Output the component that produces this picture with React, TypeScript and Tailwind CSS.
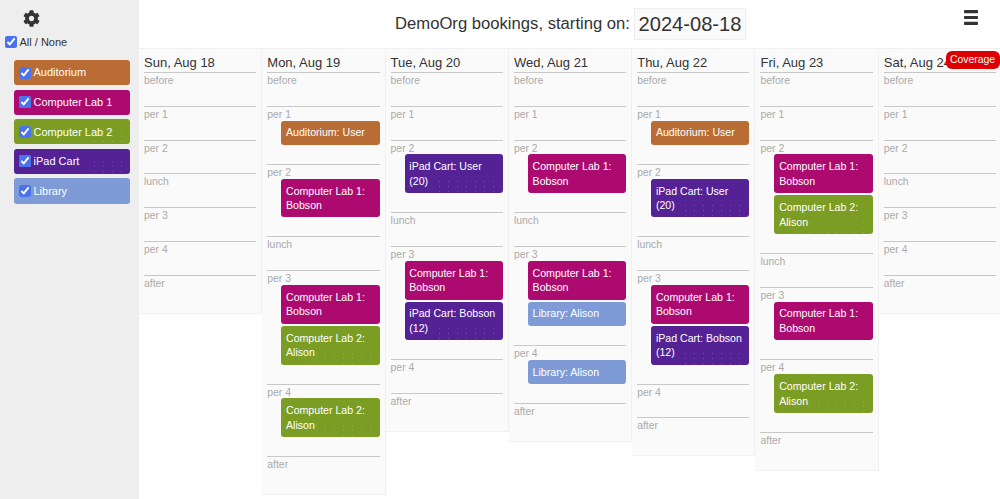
import { FaCog } from "react-icons/fa";

type Booking = { label: string; second?: string; color: string; dots?: boolean };

const AUD = "#b96d34";
const LAB1 = "#ad0a70";
const LAB2 = "#7c9d24";
const IPAD = "#552295";
const LIB = "#7e9bd8";

const resources = [
  { name: "Auditorium", color: AUD },
  { name: "Computer Lab 1", color: LAB1 },
  { name: "Computer Lab 2", color: LAB2, dots: true },
  { name: "iPad Cart", color: IPAD, dots: true },
  { name: "Library", color: LIB },
];

const aud: Booking = { label: "Auditorium: User", color: AUD };
const lab1: Booking = { label: "Computer Lab 1:", second: "Bobson", color: LAB1 };
const lab2: Booking = { label: "Computer Lab 2:", second: "Alison", color: LAB2, dots: true };
const ipadUser: Booking = { label: "iPad Cart: User", second: "(20)", color: IPAD, dots: true };
const ipadBobson: Booking = { label: "iPad Cart: Bobson", second: "(12)", color: IPAD, dots: true };
const lib: Booking = { label: "Library: Alison", color: LIB };

const periods = ["before", "per 1", "per 2", "lunch", "per 3", "per 4", "after"];

const days: { title: string; bookings: Record<string, Booking[]> }[] = [
  { title: "Sun, Aug 18", bookings: {} },
  {
    title: "Mon, Aug 19",
    bookings: { "per 1": [aud], "per 2": [lab1], "per 3": [lab1, lab2], "per 4": [lab2] },
  },
  {
    title: "Tue, Aug 20",
    bookings: { "per 2": [ipadUser], "per 3": [lab1, ipadBobson] },
  },
  {
    title: "Wed, Aug 21",
    bookings: { "per 2": [lab1], "per 3": [lab1, lib], "per 4": [lib] },
  },
  {
    title: "Thu, Aug 22",
    bookings: { "per 1": [aud], "per 2": [ipadUser], "per 3": [lab1, ipadBobson] },
  },
  {
    title: "Fri, Aug 23",
    bookings: { "per 2": [lab1, lab2], "per 3": [lab1], "per 4": [lab2] },
  },
  { title: "Sat, Aug 24", bookings: {} },
];

function Dots() {
  return (
    <div className="absolute bottom-[1px] right-[2px] h-[13px] w-[66px] bg-[radial-gradient(circle,rgba(255,255,255,0.18)_0.5px,transparent_0.8px)] bg-[length:9px_5px]" />
  );
}

function BookingCard({ booking }: { booking: Booking }) {
  return (
    <div
      className="relative ml-[14px] rounded-[3px] px-[4.7px] py-[4.9px] text-[10.6px] leading-[14.5px] text-white"
      style={{ backgroundColor: booking.color }}
    >
      {booking.dots && <Dots />}
      <div className="relative">{booking.label}</div>
      {booking.second && <div className="relative">{booking.second}</div>}
    </div>
  );
}

function DayColumn({ day }: { day: (typeof days)[number] }) {
  return (
    <div className="w-[123.3px] shrink-0 self-start border-b border-r border-t border-[#f0f0f0] bg-[#fafafa] px-[5px] pb-[4px] pt-[4px]">
      <div className="h-[19px] text-[13px] leading-[19px] text-[#333333]">{day.title}</div>
      {periods.map((period) => (
        <div key={period} className="border-t border-[#c8c8c8] pb-[19px]">
          <div className="h-[13.8px] text-[10.4px] leading-[16px] text-[#aaaaaa]">{period}</div>
          <div className="flex flex-col gap-[2px]">
            {(day.bookings[period] ?? []).map((b, i) => (
              <BookingCard key={i} booking={b} />
            ))}
          </div>
        </div>
      ))}
    </div>
  );
}

export default function App() {
  return (
    <div className="flex h-[499px] w-[1000px] overflow-hidden font-['Liberation_Sans',Arial,sans-serif]">
      <div className="w-[139px] shrink-0 bg-[#eeeeee]">
        <div className="flex h-[35px] items-center pl-[23px] pt-[1px] text-[#333333]">
          <FaCog className="h-[17px] w-[17px]" />
        </div>
        <label className="flex h-[14px] items-center gap-[3px] pl-[4.5px] text-[11px] text-[#333333]">
          <input type="checkbox" defaultChecked className="m-0 h-[12px] w-[12px] accent-[#4a72ea]" />
          All / None
        </label>
        <div className="flex flex-col gap-[4.3px] pl-[14px] pr-[9.5px] pt-[11px]">
          {resources.map((r) => (
            <label
              key={r.name}
              className="relative flex h-[25.3px] items-center gap-[3px] rounded-[3px] pl-[4.5px] text-[11px] text-white"
              style={{ backgroundColor: r.color }}
            >
              {r.dots && <div className="absolute bottom-[2px] right-[4px] h-[13px] w-[36px] bg-[radial-gradient(circle,rgba(255,255,255,0.16)_0.5px,transparent_0.8px)] bg-[length:9px_5px]" />}
              <input type="checkbox" defaultChecked className="relative m-0 h-[12px] w-[12px] accent-[#4a72ea]" />
              <span className="relative">{r.name}</span>
            </label>
          ))}
        </div>
      </div>
      <div className="relative min-w-0 flex-1">
        <div className="flex h-[48px] items-center justify-center pl-[2px] text-[16.65px] text-[#333333]">
          <span>DemoOrg bookings, starting on:</span>
          <span className="ml-[4px] flex h-[32px] w-[112px] items-center justify-center border border-[#eeeeee] bg-[#fafafa] text-[20.1px]">2024-08-18</span>
        </div>
        <svg className="absolute right-[22.5px] top-[10px] h-[15px] w-[14px] text-[#333333]" viewBox="0 0 14 15" fill="currentColor">
          <rect x="0" y="0" width="14" height="3.2" rx="0.8" />
          <rect x="0" y="5.9" width="14" height="3.2" rx="0.8" />
          <rect x="0" y="11.8" width="14" height="3.2" rx="0.8" />
        </svg>
        <div className="flex">
          {days.map((d) => (
            <DayColumn key={d.title} day={d} />
          ))}
        </div>
        <div className="absolute right-[0.5px] top-[51px] flex h-[18px] w-[54px] items-center justify-center rounded-[6px] bg-[#dd0000] text-[10.4px] text-white">
          Coverage
        </div>
      </div>
    </div>
  );
}
